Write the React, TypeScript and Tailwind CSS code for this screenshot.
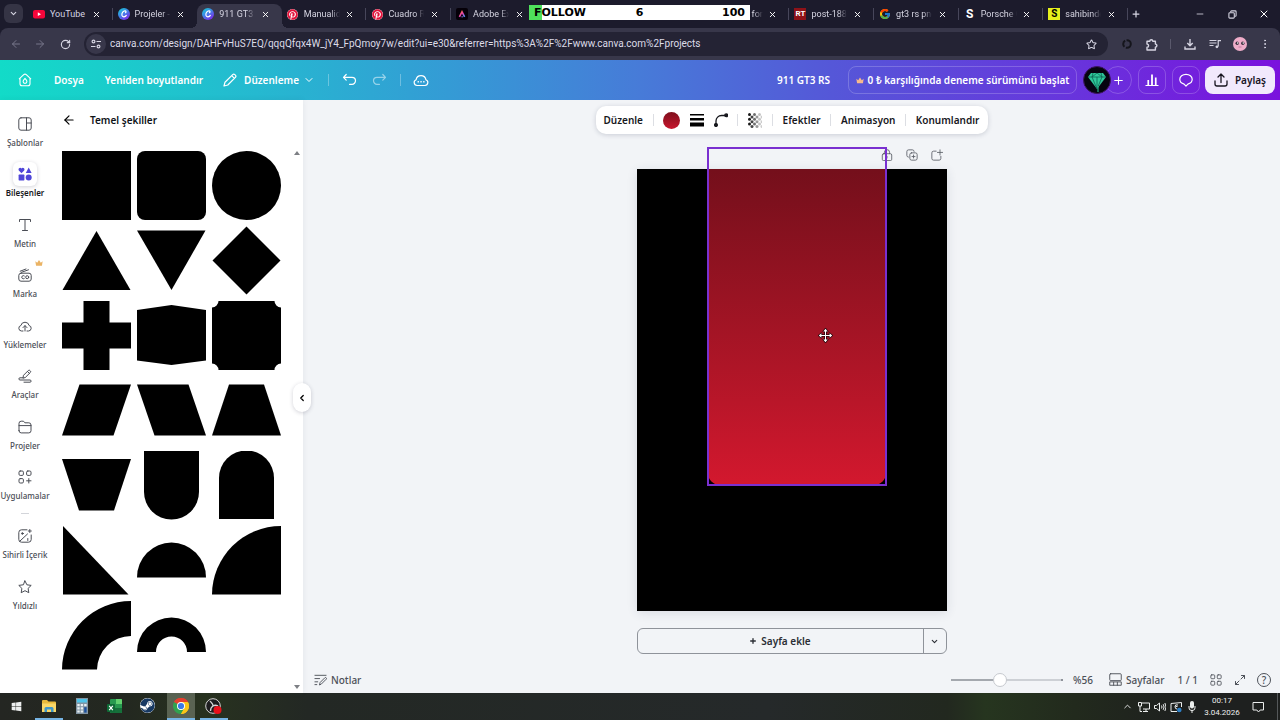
import React from "react";
import {
  ArrowLeft, ArrowRight, RotateCw, ChevronDown, ChevronLeft, ChevronUp, X, Plus, Minus, Star,
  EllipsisVertical, Maximize2,
} from "lucide-react";
import { FcGoogle } from "react-icons/fc";
import { FaSteam, FaPinterest, FaWindows } from "react-icons/fa";

const canvaFont = "font-['Noto_Sans','Open_Sans',sans-serif]";

function CanvaLogo() {
  return (
    <svg viewBox="0 0 12 12" className="size-3">
      <defs>
        <linearGradient id="cv" x1="0" y1="0" x2="0.7" y2="1">
          <stop offset="0" stopColor="#12d3cf" />
          <stop offset="0.45" stopColor="#3a8fe8" />
          <stop offset="1" stopColor="#7d2ae8" />
        </linearGradient>
      </defs>
      <circle cx="6" cy="6" r="6" fill="url(#cv)" />
      <path d="M8.300 7.400C7.400 9 4.400 9.600 3.900 7.200 3.500 5 5.400 2.800 7 2.900c1.200.1 1.300 1.300.5 1.800" fill="none" stroke="#fff" strokeWidth="1.200" strokeLinecap="round" />
    </svg>
  );
}

function YouTubeLogo() {
  return (
    <svg viewBox="0 0 12 12" className="size-3">
      <rect x="0" y="2" width="12" height="8.400" rx="2" fill="#f5063a" />
      <path d="M4.800 4.300 8 6.200 4.800 8.100z" fill="#fff" />
    </svg>
  );
}

function PinterestLogo() {
  return (
    <span className="block rounded-full bg-white">
      <FaPinterest className="size-[11px] text-[#e0123a]" />
    </span>
  );
}

function AdobeLogo() {
  return (
    <svg viewBox="0 0 12 12" className="size-3">
      <defs>
        <linearGradient id="ad" x1="0" y1="0" x2="1" y2="1">
          <stop offset="0" stopColor="#ff7a2f" />
          <stop offset="0.5" stopColor="#e83fb8" />
          <stop offset="1" stopColor="#3fa0ff" />
        </linearGradient>
      </defs>
      <rect width="12" height="12" rx="2" fill="#050008" />
      <path d="M3.400 8.800 6 3.800 8.600 8.800M5.600 8.800h1" fill="none" stroke="url(#ad)" strokeWidth="1.600" />
    </svg>
  );
}

const Badge = ({ letters, tone }: { letters: string; tone: string }) => (
  <span className={`flex size-3 items-center justify-center leading-3 font-bold ${tone}`}>{letters}</span>
);

type Tab = { title: string; icon: React.ReactNode; active?: boolean; end?: boolean };

const tabs: Tab[] = [
  { title: "YouTube", icon: <YouTubeLogo /> },
  { title: "Projeler -", icon: <CanvaLogo /> },
  { title: "911 GT3 R", icon: <CanvaLogo />, active: true },
  { title: "Manualid", icon: <PinterestLogo /> },
  { title: "Cuadro Re", icon: <PinterestLogo /> },
  { title: "Adobe Ex", icon: <AdobeLogo /> },
  { title: "", icon: null },
  { title: "", icon: null },
  { title: "S for", icon: null, end: true },
  { title: "post-1884", icon: <Badge letters="RT" tone="bg-[#8e1218] text-white text-[8px]" /> },
  { title: "gt3 rs png", icon: <FcGoogle className="size-3" /> },
  { title: "Porsche G", icon: <Badge letters="S" tone="text-white text-[12px]" /> },
  { title: "sahibinde", icon: <Badge letters="S" tone="bg-[#e6f01c] text-black text-[10px]" /> },
];

function TabStrip() {
  return (
    <div className="relative flex h-7 shrink-0 items-end bg-[#1c1b2c] text-[#d6d5e2]">
      <button aria-label="Sekme ara" className="mb-[5px] ml-1 flex size-[19px] items-center justify-center rounded-md bg-[#353445]">
        <ChevronDown className="size-[9px]" strokeWidth={3} />
      </button>
      <div className="ml-[5px] flex h-6 min-w-0 flex-1">
        {tabs.map((t, i) => (
          <div
            key={i}
            className={`relative flex h-6 min-w-0 flex-1 items-center pb-1 ${t.active ? "rounded-t-lg bg-[#38374a]" : ""}`}
          >
            {t.active && (
              <>
                <span className="absolute bottom-0 -left-1.5 size-1.5 bg-[radial-gradient(circle_at_0_0,transparent_6px,#38374a_6px)]" />
                <span className="absolute -right-1.5 bottom-0 size-1.5 bg-[radial-gradient(circle_at_100%_0,transparent_6px,#38374a_6px)]" />
              </>
            )}
            <span className="ml-[5px] flex size-3 shrink-0 items-center justify-center">{t.icon}</span>
            <span className={`ml-[5px] w-9 shrink-0 text-[9px] leading-4 whitespace-nowrap ${t.end ? "text-right" : ""} ${i > 0 ? "mask-r-from-75% mask-r-to-100%" : ""}`}>{t.title}</span>
            <button aria-label="Sekmeyi kapat" className="ml-1 flex size-3 shrink-0 items-center justify-center text-white">
              <X className="size-[9px]" strokeWidth={2.5} />
            </button>
            {i !== 1 && i !== 2 && <span className="absolute top-1 right-0 h-3 w-px bg-[#47465a]" />}
          </div>
        ))}
      </div>
      <button aria-label="Yeni sekme" className="mb-2 ml-0.5 flex size-3 items-center justify-center">
        <Plus className="size-[10px]" strokeWidth={3} />
      </button>
      <div className="mb-2 ml-[52px] flex gap-5 pr-[10px]">
        <button aria-label="Simge durumuna küçült" className="flex size-3 items-center justify-center"><Minus className="size-[10px]" /></button>
        <button aria-label="Önceki boyut" className="flex size-3 items-center justify-center">
          <svg viewBox="0 0 10 10" className="size-[9px]" fill="none" stroke="currentColor" strokeWidth="1.200">
            <rect x="1" y="3" width="6" height="6" rx="1" />
            <path d="M3 2.500V2a1 1 0 0 1 1-1h4a1 1 0 0 1 1 1v4a1 1 0 0 1-1 1h-.5" />
          </svg>
        </button>
        <button aria-label="Kapat" className="flex size-3 items-center justify-center text-white"><X className="size-3" strokeWidth={2} /></button>
      </div>
      <div className="absolute top-[5px] left-[529px] grid h-[15px] w-[221px] grid-cols-3 bg-[linear-gradient(90deg,#4fe05c_13px,#fff_13px)] px-[5px] font-['DejaVu_Sans',sans-serif] text-[11px] leading-[15px] font-bold text-black">
        <span>FOLLOW</span>
        <span className="text-center">6</span>
        <span className="text-right">100</span>
      </div>
    </div>
  );
}

function BrowserBar() {
  return (
    <div className="shrink-0 bg-[#1c1b2c]">
      <div className="flex h-8 items-center rounded-t-lg bg-[#38374a] text-[#d6d5e2]">
        <button aria-label="Geri" className="ml-[10px] text-[#77768a]"><ArrowLeft className="size-3" /></button>
        <button aria-label="İleri" className="ml-3 text-[#77768a]"><ArrowRight className="size-3" /></button>
        <button aria-label="Yenile" className="ml-[14px]"><RotateCw className="size-[11px]" strokeWidth={2.5} /></button>
        <div className="ml-[13px] flex h-6 min-w-0 flex-1 items-center rounded-full bg-[#242334] px-0.5">
          <span className="flex size-5 items-center justify-center rounded-full bg-[#38374a]">
            <svg viewBox="0 0 10 10" className="size-[10px]" fill="none" stroke="currentColor" strokeWidth="1.200">
              <circle cx="2.500" cy="2.500" r="1.400" /><path d="M5.500 2.500H10M0 7.500h4.500" /><circle cx="7.500" cy="7.500" r="1.400" />
            </svg>
          </span>
          <input
            aria-label="Adres çubuğu"
            className="ml-1 min-w-0 flex-1 bg-transparent text-[10px] leading-4 text-[#dcdbe8] outline-none"
            defaultValue="canva.com/design/DAHFvHuS7EQ/qqqQfqx4W_jY4_FpQmoy7w/edit?ui=e30&referrer=https%3A%2F%2Fwww.canva.com%2Fprojects"
          />
          <button aria-label="Yer işareti ekle" className="mr-[9px]"><Star className="size-[11px]" strokeWidth={2.2} /></button>
        </div>
        <svg viewBox="0 0 10 10" className="ml-[14px] size-[10px]" fill="none" stroke="#15151c" strokeWidth="2">
          <circle cx="5" cy="5" r="3.800" strokeDasharray="7 1.500" />
        </svg>
        <button aria-label="Uzantılar" className="ml-[13px]">
          <svg viewBox="0 0 13 13" className="size-[13px]" fill="none" stroke="currentColor" strokeWidth="1.400" strokeLinejoin="round">
            <path d="M2 3.200h2.800a1.500 1.500 0 0 1 3 0h2.600v2.900a1.500 1.500 0 0 1 0 3V12H2V9.300a1.600 1.600 0 0 0 0-3.200z" />
          </svg>
        </button>
        <span className="ml-3 h-[10px] w-px bg-[#5a596c]" />
        <button aria-label="İndirilenler" className="ml-[13px]">
          <svg viewBox="0 0 12 12" className="size-3" fill="none" stroke="currentColor" strokeWidth="1.400">
            <path d="M6 1v6.500M3.300 5 6 7.700 8.700 5M1 8.500V11h10V8.500" />
          </svg>
        </button>
        <button aria-label="Medya" className="ml-[13px]">
          <svg viewBox="0 0 12 12" className="size-3" fill="none" stroke="currentColor" strokeWidth="1.200">
            <path d="M.5 2.500h7M.5 5h7M.5 7.500h4M9.200 8.500V2.600H12" />
            <circle cx="7.900" cy="8.800" r="1.400" fill="currentColor" stroke="none" />
          </svg>
        </button>
        <button aria-label="Profil" className="ml-3">
          <svg viewBox="0 0 14 14" className="size-[14px]">
            <circle cx="7" cy="7" r="7" fill="#efadc9" />
            <circle cx="4.200" cy="6.300" r="1.700" fill="#3c2c3c" /><circle cx="9.800" cy="6.300" r="1.700" fill="#3c2c3c" />
            <circle cx="4.700" cy="6" r=".8" fill="#fff" /><circle cx="10.300" cy="6" r=".8" fill="#fff" />
            <path d="M5.500 10h3" stroke="#b5688c" strokeWidth=".7" />
          </svg>
        </button>
        <button aria-label="Menü" className="mr-[9px] ml-3"><EllipsisVertical className="size-3" /></button>
      </div>
    </div>
  );
}

const Crown = ({ className }: { className: string }) => (
  <svg viewBox="0 0 12 10" className={className} fill="currentColor">
    <path d="M.5 2.500 3.300 4.800 6 .5l2.700 4.300 2.800-2.300-1.100 6.500H1.600z" />
  </svg>
);

const Rule = ({ className }: { className: string }) => <span className={`w-px shrink-0 ${className}`} />;

function CanvaHeader() {
  return (
    <header className={`flex h-10 shrink-0 items-center bg-[linear-gradient(90deg,#12dbc8_0%,#25b9d0_20%,#349bd5_35%,#477bd8_50%,#5557d8_65%,#6638dc_82%,#7a12dd_100%)] text-[10px] leading-4 font-semibold whitespace-nowrap text-white ${canvaFont}`}>
      <button aria-label="Ana sayfa" className="ml-[18px]">
        <svg viewBox="0 0 14 14" className="size-[14px]" fill="none" stroke="currentColor" strokeWidth="1.100" strokeLinejoin="round">
          <path d="M1 6.200 5.700 1.700Q7 .6 8.300 1.700L13 6.200M2 5.400v5.400a2 2 0 0 0 2 2h6a2 2 0 0 0 2-2V5.400" />
          <path d="M7 5.400c-1.200 1.300-1.900 2-1.900 3.100a1.900 1.900 0 0 0 3.800 0C8.900 7.400 8.200 6.700 7 5.400z" />
        </svg>
      </button>
      <button className="ml-[22px]">Dosya</button>
      <button className="ml-[21px]">Yeniden boyutlandır</button>
      <button className="ml-5 flex items-center">
        <svg viewBox="0 0 14 14" className="mr-[7px] size-[14px]" fill="none" stroke="currentColor" strokeWidth="1.200" strokeLinejoin="round">
          <path d="M1 13l1-3.800 7.700-7.600a1.500 1.500 0 0 1 2.100 0l.6.6a1.500 1.500 0 0 1 0 2.100L4.800 12zM8.700 2.600l2.700 2.700" />
        </svg>
        Düzenleme
        <ChevronDown className="ml-1 size-3" />
      </button>
      <Rule className="ml-[13px] h-3 bg-white/30" />
      <button aria-label="Geri al" className="ml-[13px]">
        <svg viewBox="0 0 15 14" className="h-[14px] w-[15px]" fill="none" stroke="currentColor" strokeWidth="1.200" strokeLinecap="round" strokeLinejoin="round">
          <path d="M4.200 1.500 1.500 4.300l2.700 2.800M1.800 4.300H10a3.500 3.500 0 0 1 0 7H7.500" />
        </svg>
      </button>
      <button aria-label="Yinele" className="ml-[15px] opacity-50">
        <svg viewBox="0 0 15 14" className="h-[14px] w-[15px]" fill="none" stroke="currentColor" strokeWidth="1.200" strokeLinecap="round" strokeLinejoin="round">
          <path d="M10.800 1.500l2.700 2.800-2.700 2.800M13.200 4.300H5a3.500 3.500 0 0 0 0 7h2.500" />
        </svg>
      </button>
      <Rule className="ml-[13px] h-3 bg-white/30" />
      <button aria-label="Kaydedildi" className="ml-3">
        <svg viewBox="0 0 16 14" className="h-[14px] w-4" fill="none" stroke="currentColor" strokeWidth="1.200">
          <path d="M4 12.500a3 3 0 0 1-.9-5.800 5 5 0 0 1 9.800 0 3 3 0 0 1-.9 5.800z" />
          <path d="M4.600 8.700h1.300M7.400 8.700h1.300M10.200 8.700h1.300" strokeWidth="1.400" />
        </svg>
      </button>
      <span className="ml-auto">911 GT3 RS</span>
      <button className="ml-[18px] flex h-7 w-[229px] items-center justify-center gap-1 rounded-lg border border-white/20">
        <Crown className="h-[7px] w-2 text-[#f6b98c]" />
        0 ₺ karşılığında deneme sürümünü başlat
      </button>
      <div className="ml-1.5 flex items-center">
        <svg viewBox="0 0 28 28" className="z-10 size-7">
          <circle cx="14" cy="14" r="13.500" fill="#060410" stroke="#3d1560" />
          <path d="M8 7h12l3 4-9 12L5 11z" fill="#2fc79a" />
          <path d="M5 11h18M10 7l-1 4 5 12 5-12-1-4M14 7l-5 4M14 7l5 4M14 11v12" fill="none" stroke="#0a5a4a" strokeWidth=".7" />
          <path d="M15 20v6" stroke="#2fc79a" strokeWidth="1" />
        </svg>
        <button aria-label="Üye ekle" className="-ml-[7px] flex size-7 items-center justify-center rounded-full border border-white/20"><Plus className="size-[13px]" /></button>
      </div>
      <button aria-label="Analizler" className="ml-1.5 flex size-7 items-center justify-center rounded-lg border border-white/20">
        <svg viewBox="0 0 14 14" className="size-[14px]" fill="none" stroke="currentColor" strokeWidth="1.200"><path d="M.5 12.500h13M3 12V7.500h.5V12M6.700 12V2h.6v10M10.500 12V5h.5v7" /></svg>
      </button>
      <button aria-label="Yorumlar" className="ml-1.5 flex size-7 items-center justify-center rounded-lg border border-white/20">
        <svg viewBox="0 0 14 14" className="size-[14px]" fill="none" stroke="currentColor" strokeWidth="1.200" strokeLinejoin="round"><path d="M7 1.300c3.500 0 6.200 2.200 6.200 5 0 2.300-1.700 4.100-4.300 4.800L7 13.200l-1.900-2.100C2.500 10.400.8 8.600.8 6.300c0-2.800 2.700-5 6.200-5z" /></svg>
      </button>
      <button className="mr-[5px] ml-[5px] flex h-7 w-[70px] items-center justify-center gap-[7px] rounded-lg bg-[#f1e9fc] text-[#17141f]">
        <svg viewBox="0 0 14 14" className="size-[14px]" fill="none" stroke="currentColor" strokeWidth="1.300" strokeLinecap="round" strokeLinejoin="round"><path d="M7 9.500V1M4 4l3-3 3 3M1 8v3a2 2 0 0 0 2 2h8a2 2 0 0 0 2-2V8" /></svg>
        Paylaş
      </button>
    </header>
  );
}

const iconProps = { viewBox: "0 0 14 14", className: "size-[14px]", fill: "none", stroke: "currentColor", strokeWidth: 1, strokeLinejoin: "round" as const, strokeLinecap: "round" as const };

type NavEntry = { label: string; icon: React.ReactNode; active?: boolean; crown?: boolean };

const navTop: NavEntry[] = [
  { label: "Şablonlar", icon: <svg {...iconProps}><rect x=".8" y=".8" width="12.400" height="12.400" rx="2.200" /><path d="M8.500.8v12.400M8.500 6h4.700" /></svg> },
  { label: "Bileşenler", active: true, icon: <svg viewBox="0 0 14 14" className="size-[14px] text-[#4f46d8]" fill="currentColor"><path d="M3.500 6.300.8 3.400C-.3 1.800 2.200-.5 3.500 1.600 4.800-.5 7.300 1.800 6.200 3.400zM10.700.6l2.900 5.400H7.800z" /><rect x=".6" y="7.600" width="5.800" height="5.800" rx=".6" /><circle cx="10.700" cy="10.500" r="3" /></svg> },
  { label: "Metin", icon: <svg {...iconProps}><path d="M1.500 3.500V1.500h11v2M7 1.500v11M4.500 12.500h5" /></svg> },
  { label: "Marka", crown: true, icon: <svg {...iconProps}><rect x=".8" y="5.200" width="12.400" height="8" rx="2.200" /><path d="M2.200 3.200 8 1M3.500 4.300 10.500 1.800M6.300 7.900a1.600 1.600 0 1 0 0 2.600" /><circle cx="9.200" cy="9.200" r="1.500" /></svg> },
  { label: "Yüklemeler", icon: <svg {...iconProps}><path d="M5 12H3.500a2.800 2.800 0 0 1-.6-5.500 4.200 4.200 0 0 1 8.200 0 2.800 2.800 0 0 1-.6 5.500H9M7 12V6.800M5 8.600l2-2 2 2" /></svg> },
  { label: "Araçlar", icon: <svg {...iconProps}><path d="M5 8.800l.5-2.500L10.300 1.500a1.100 1.100 0 0 1 1.600 0l.4.4a1.100 1.100 0 0 1 0 1.600L7.500 8.300zM9.500 2.500l1.800 1.800M5 8.800H2a1 1 0 0 0 0 2.200h10a1 1 0 0 1 0 2.200H6" /></svg> },
  { label: "Projeler", icon: <svg {...iconProps}><path d="M1 10.700V3.400A2.200 2.200 0 0 1 3.200 1.200h2.300l1.400 1.600h3.900A2.200 2.200 0 0 1 13 5v5.700a2.200 2.200 0 0 1-2.200 2.200H3.200A2.200 2.200 0 0 1 1 10.700zM1 5.600h12" /></svg> },
  { label: "Uygulamalar", icon: <svg {...iconProps}><rect x="1" y="1" width="4.400" height="4.400" rx="1.200" /><rect x="8.600" y="1" width="4.400" height="4.400" rx="1.200" /><rect x="1" y="8.600" width="4.400" height="4.400" rx="1.200" /><path d="M10.800 8.600V13M8.600 10.800H13" /></svg> },
];

const navBottom: NavEntry[] = [
  { label: "Sihirli İçerik", icon: <svg {...iconProps}><path d="M9 .8H3.500A2.700 2.700 0 0 0 .8 3.500v7a2.700 2.700 0 0 0 2.700 2.700h7a2.700 2.700 0 0 0 2.700-2.700V6M1.800 12.200 9.500 5" /><circle cx="4.400" cy="4.500" r=".8" fill="currentColor" /><path d="M9.800 11.500v-2M11.800.5v3M10.300 2h3" /></svg> },
  { label: "Yıldızlı", icon: <svg {...iconProps}><path d="M7 .9l1.900 3.900 4.300.6-3.100 3 .7 4.300L7 10.700l-3.800 2 .7-4.300-3.100-3 4.300-.6z" /></svg> },
];

function NavItem({ item }: { item: NavEntry }) {
  return (
    <button className="relative flex h-[38px] flex-col items-center whitespace-nowrap text-[#4a4d55]">
      <span className={`flex size-6 shrink-0 items-center justify-center rounded-md ${item.active ? "bg-white shadow-[0_1px_4px_rgba(30,30,60,0.2)]" : ""}`}>
        {item.icon}
      </span>
      <span className={`text-[8px] leading-[14px] ${item.active ? "font-semibold text-[#17181d]" : "font-medium text-[#4a4d55]"}`}>{item.label}</span>
      {item.crown && <Crown className="absolute -top-1 left-1/2 ml-[10px] h-2 w-2 text-[#eab364]" />}
    </button>
  );
}

const shapes: { name: string; d: string }[] = [
  { name: "Kare", d: "M0 0H69V69H0z" },
  { name: "Yuvarlatılmış kare", d: "M8 0H61A8 8 0 0 1 69 8V61A8 8 0 0 1 61 69H8A8 8 0 0 1 0 61V8A8 8 0 0 1 8 0z" },
  { name: "Daire", d: "M34.500 0A34.500 34.500 0 0 1 34.500 69A34.500 34.500 0 0 1 34.500 0z" },
  { name: "Üçgen", d: "M34.500 5 68.500 64H.5z" },
  { name: "Ters üçgen", d: "M0 4.500H68.500L34.500 64z" },
  { name: "Eşkenar dörtgen", d: "M34.500.5 68.500 34.500 34.500 68.500.5 34.500z" },
  { name: "Artı", d: "M21.500 0H47.500V21.500H69V47.500H47.500V69H21.500V47.500H0V21.500H21.500z" },
  { name: "Afiş", d: "M0 9 34.500 4 69 9V59.500L34.500 64 0 59.500z" },
  { name: "Plaket", d: "M6.500 0H62.500A6.500 6.500 0 0 0 69 6.500V62.500A6.500 6.500 0 0 0 62.500 69H6.500A6.500 6.500 0 0 0 0 62.500V6.500A6.500 6.500 0 0 0 6.500 0z" },
  { name: "Paralelkenar", d: "M17.500 8.500H69L51.500 59.500H0z" },
  { name: "Ters paralelkenar", d: "M0 8.500H51.500L69 59.500H17.500z" },
  { name: "Yamuk", d: "M17 8.500H52L69 59.500H0z" },
  { name: "Ters yamuk", d: "M0 8H69L52 59.500H17z" },
  { name: "Ters kemer", d: "M7 0H62V41A27.500 27.500 0 0 1 7 41z" },
  { name: "Kemer", d: "M7 68V27A27.500 27.500 0 0 1 62 27V68z" },
  { name: "Dik üçgen", d: "M1 0 66.500 68.500H1z" },
  { name: "Yarım daire", d: "M0 51.500A34.500 35 0 0 1 69 51.500z" },
  { name: "Çeyrek daire", d: "M69 0V68.500H0A69 69 0 0 1 69 0z" },
  { name: "Çeyrek halka", d: "M69 0V35A34 34 0 0 0 35 68.500H0A69 69 0 0 1 69 0z" },
  { name: "Yarım halka", d: "M0 51A34.500 34.500 0 0 1 69 51H50A15.500 15.500 0 0 0 19 51z" },
];

function SidePanel() {
  return (
    <aside className="relative flex w-[303px] shrink-0 bg-white shadow-[0_0_6px_rgba(40,50,80,0.08)]">
      <nav className="flex w-[50px] shrink-0 flex-col items-center pt-3">
        <div className="flex h-[391px] flex-col items-center justify-between">
          {navTop.map((n) => <NavItem key={n.label} item={n} />)}
        </div>
        <span className="mt-[10px] h-px w-2 bg-[#d3d5da]" />
        <div className="mt-[10px] flex flex-col items-center gap-[13px]">
          {navBottom.map((n) => <NavItem key={n.label} item={n} />)}
        </div>
      </nav>
      <div className="ml-3 flex-1">
        <div className="flex h-10 items-center">
          <button aria-label="Geri dön"><ArrowLeft className="size-[14px]" strokeWidth={2} /></button>
          <h2 className="ml-[14px] text-[10px] leading-4 font-semibold text-[#0e1318]">Temel şekiller</h2>
        </div>
        <div className="mt-[11px] grid w-[219px] grid-cols-3 gap-1.5">
          {shapes.map((s) => (
            <button key={s.name} aria-label={s.name} className="aspect-square">
              <svg viewBox="0 0 69 69" className="block w-full"><path d={s.d} /></svg>
            </button>
          ))}
        </div>
      </div>
      <div className="flex w-3 flex-col items-center justify-between pt-[51px] pb-1">
        <svg viewBox="0 0 6 4" className="h-1 w-1.5 fill-[#7d7f84]"><path d="M3 0l3 4H0z" /></svg>
        <svg viewBox="0 0 6 4" className="h-1 w-1.5 fill-[#7d7f84]"><path d="M3 4l3-4H0z" /></svg>
      </div>
      <button aria-label="Paneli gizle" className="absolute top-[283px] -right-2 z-20 flex h-[29px] w-[18px] items-center justify-center rounded-full bg-white shadow-[0_1px_4px_rgba(30,30,60,0.2)]">
        <ChevronLeft className="size-[10px]" strokeWidth={3} />
      </button>
    </aside>
  );
}

const dots = Array.from({ length: 18 }, (_, i) => {
  const row = Math.floor(i / 3);
  return { x: 1.5 + (i % 3) * 5 + (row % 2) * 2.5, y: 1.5 + row * 2.4 };
});

function ContextBar() {
  return (
    <div className="flex h-7 w-[392px] items-center justify-between rounded-[10px] bg-white px-2 text-[10px] font-semibold text-[#17181d] shadow-[0_1px_5px_rgba(40,50,80,0.2)]">
      <button>Düzenle</button>
      <Rule className="h-3 bg-[#dcdee3]" />
      <button aria-label="Renk" className="size-[17px] rounded-full bg-linear-to-b from-[#7f0f1c] to-[#c8152d]" />
      <button aria-label="Kenarlık stili">
        <svg viewBox="0 0 14 14" className="size-[14px]"><path d="M0 1h14v1.500H0zM0 5h14v2.500H0zM0 9.500h14v4H0z" /></svg>
      </button>
      <button aria-label="Köşe yuvarlama">
        <svg viewBox="0 0 14 14" className="size-[14px]" fill="none" stroke="#17181d" strokeWidth="1.300"><path d="M2 11V8a5.500 5.500 0 0 1 5.500-5.500H11" /><circle cx="2" cy="12" r="1.400" fill="#17181d" /><circle cx="12.200" cy="2.300" r="1.400" fill="#17181d" /></svg>
      </button>
      <Rule className="h-3 bg-[#dcdee3]" />
      <button aria-label="Saydamlık">
        <svg viewBox="0 0 14 15" className="h-[15px] w-[14px]">
          {dots.map((p, i) => <circle key={i} cx={p.x} cy={p.y} r="1.500" fillOpacity={Math.max(0.2, 1 - p.x / 15)} />)}
        </svg>
      </button>
      <Rule className="h-3 bg-[#dcdee3]" />
      <button>Efektler</button>
      <Rule className="h-3 bg-[#dcdee3]" />
      <button>Animasyon</button>
      <Rule className="h-3 bg-[#dcdee3]" />
      <button>Konumlandır</button>
    </div>
  );
}

function Workspace() {
  return (
    <main className="flex min-w-0 flex-1 flex-col items-center bg-[#f2f4f7] pt-1.5">
      <ContextBar />
      <div className="mt-[13px] flex h-4 w-[310px] shrink-0 items-center justify-end gap-[13px] pr-1 text-[#5a5e66]">
        <button aria-label="Sayfayı kilitle"><svg {...iconProps} className="size-3"><rect x="1.500" y="5.500" width="11" height="8" rx="1.500" /><path d="M4 5.500V3.800a3 3 0 0 1 6 0v1.700M7 8.500v2" /></svg></button>
        <button aria-label="Sayfayı çoğalt"><svg {...iconProps} className="size-3"><rect x="4.500" y="4.500" width="8.500" height="8.500" rx="2" /><path d="M2.800 9.500A2 2 0 0 1 1 7.500V3a2 2 0 0 1 2-2h4.500a2 2 0 0 1 2 1.800M8.800 7v3.500M7 8.800h3.500" /></svg></button>
        <button aria-label="Sayfa ekle"><svg {...iconProps} className="size-3"><path d="M6 2.500H3a2 2 0 0 0-2 2V11a2 2 0 0 0 2 2h6.500a2 2 0 0 0 2-2V8.500M10.500 1v6M7.500 4h6" /></svg></button>
      </div>
      <div className="relative mt-1.5 h-[442px] w-[310px] shrink-0 bg-black shadow-[0_2px_10px_rgba(40,50,80,0.12)]">
        <div className="absolute top-0 left-[71px] h-[316px] w-[178px] rounded-b-xl bg-linear-to-b from-[#740f1b] to-[#d3182e]" />
        <div className="absolute -top-[22px] left-[70px] h-[339px] w-[180px] border-2 border-[#7a30d0]" />
        <svg viewBox="0 0 15 15" className="absolute top-[159px] left-[181px] size-[15px]" strokeLinejoin="round">
          <path d="M7.500 2v11M2 7.500h11" stroke="#2a060c" strokeWidth="2.600" />
          <path d="M7.500.8 9.700 3.400H5.300zM7.500 14.200 5.300 11.600h4.400zM.8 7.500 3.400 5.300v4.400zM14.200 7.500 11.600 9.700V5.300z" fill="#fff" stroke="#2a060c" strokeWidth="1.600" paintOrder="stroke" />
          <path d="M7.500 2.500v10M2.500 7.500h10" stroke="#fff" strokeWidth="1" />
        </svg>
      </div>
      <div className="mt-[17px] flex h-[26px] w-[310px] shrink-0 rounded-md border border-[#8f939a] text-[10px] font-semibold text-[#2b2e35]">
        <button className="flex flex-1 items-center justify-center gap-1"><Plus className="size-2" strokeWidth={4} />Sayfa ekle</button>
        <button aria-label="Sayfa seçenekleri" className="flex w-[23px] items-center justify-center border-l border-[#8f939a]"><ChevronDown className="size-[9px]" strokeWidth={3} /></button>
      </div>
      <footer className="mt-auto flex h-[27px] w-full shrink-0 items-center pl-[11px] text-[10px] leading-4 font-medium text-[#4d5159]">
        <button className="flex items-center gap-1">
          <svg {...iconProps} className="h-[13px] w-[13px]"><path d="M1 2.500h12M1 6h5M1 9.500h3M1 12.500h2M6 12.500l.6-2.300 5-5a1 1 0 0 1 1.500 1.500l-5 5z" /></svg>
          Notlar
        </button>
        <input
          type="range"
          aria-label="Yakınlaştırma"
          defaultValue={43}
          className="ml-auto h-4 w-28 appearance-none bg-[linear-gradient(90deg,#a4a8ae_44%,#cdd0d5_44%,#cdd0d5_98%,#8f939a_98%)] bg-size-[100%_2px] bg-center bg-no-repeat [&::-webkit-slider-thumb]:size-[14px] [&::-webkit-slider-thumb]:appearance-none [&::-webkit-slider-thumb]:rounded-full [&::-webkit-slider-thumb]:border [&::-webkit-slider-thumb]:border-[#c6c9ce] [&::-webkit-slider-thumb]:bg-white"
        />
        <span className="ml-[10px]">%56</span>
        <button className="ml-4 flex items-center gap-1">
          <svg {...iconProps} className="size-[13px]"><rect x=".8" y=".8" width="12.400" height="7.400" rx="1" /><path d="M.8 10v3.200h12.400V10zM5 10v3.200M9 10v3.200" /></svg>
          Sayfalar
        </button>
        <span className="ml-[13px]">1 / 1</span>
        <button aria-label="Izgara görünümü" className="ml-3"><svg {...iconProps} className="size-3"><rect x="1" y="1" width="4.500" height="4.500" rx="1" /><rect x="8.500" y="1" width="4.500" height="4.500" rx="1" /><rect x="1" y="8.500" width="4.500" height="4.500" rx="1" /><rect x="8.500" y="8.500" width="4.500" height="4.500" rx="1" /></svg></button>
        <button aria-label="Tam ekran" className="ml-3"><Maximize2 className="size-3" /></button>
        <button aria-label="Yardım" className="mr-[9px] ml-[11px] flex size-[14px] items-center justify-center rounded-full border border-[#4d5159] text-[10px] leading-3">?</button>
      </footer>
    </main>
  );
}

const apps: { name: string; line?: boolean; active?: boolean; icon: React.ReactNode }[] = [
  { name: "Dosya Gezgini", line: true, icon: <svg viewBox="0 0 16 16" className="size-4"><path d="M1 3a1 1 0 0 1 1-1h4l1.500 1.500H14a1 1 0 0 1 1 1V14H1z" fill="#e8b93c" /><path d="M1 5.500h14V14H1z" fill="#f9d768" /><path d="M3.500 14v-3.500a1.500 1.500 0 0 1 1.500-1.500h6a1.500 1.500 0 0 1 1.500 1.500V14h-2.500v-2.500h-4V14z" fill="#3f97c9" /></svg> },
  { name: "Hesap Makinesi", icon: <svg viewBox="0 0 16 16" className="size-4"><rect x="2" y="0" width="12" height="16" fill="#8295a3" /><rect x="3" y="1" width="10" height="3.500" fill="#4fc3e8" /><path d="M3.300 6h2.400v2.200H3.300zM6.700 6h2.400v2.200H6.700zM3.300 9.200h2.400v2.200H3.300zM6.700 9.200h2.400v2.200H6.700zM3.300 12.400h2.400v2.200H3.300zM6.700 12.400h2.400v2.200H6.700zM10.200 6h2.400v2.200h-2.400z" fill="#e8eff3" /><path d="M10.200 9.200h2.400v5.400h-2.400z" fill="#1b4f9c" /></svg> },
  { name: "Excel", icon: <svg viewBox="0 0 16 16" className="size-4"><rect x="3" y="1" width="12" height="14" rx="1" fill="#27994f" /><path d="M9 1h5a1 1 0 0 1 1 1v4H9z" fill="#62d16f" /><path d="M3 10h12v4a1 1 0 0 1-1 1H4a1 1 0 0 1-1-1z" fill="#15703a" /><rect x="0" y="6" width="8" height="8" rx="1" fill="#0f6b37" /><path d="M2.200 7.800l3.600 4.400M5.800 7.800l-3.600 4.400" stroke="#fff" strokeWidth="1.200" /></svg> },
  { name: "Steam", icon: <span className="block overflow-hidden rounded-full bg-white"><FaSteam className="size-[15px] text-[#173963]" /></span> },
  { name: "Chrome", line: true, active: true, icon: <svg viewBox="0 0 16 16" className="size-4"><path d="M8 8 1.070 4A8 8 0 0 1 14.930 4z" fill="#e6402f" /><path d="M8 8 14.930 4A8 8 0 0 1 8 16z" fill="#fbc618" /><path d="M8 8 8 16A8 8 0 0 1 1.070 4z" fill="#31a350" /><path d="M8 4h6.930L11.500 10z" fill="#fbc618" /><path d="M1.070 4 4.500 10 8 8V4z" fill="#31a350" /><path d="M1.070 4A8 8 0 0 1 14.930 4H8L4.500 6z" fill="#e6402f" /><path d="M11.500 10 8 16 4.500 10z" fill="#31a350" /><path d="M11.500 10 8 16A8 8 0 0 0 14.930 4z" fill="#fbc618" /><circle cx="8" cy="8" r="4" fill="#fff" /><circle cx="8" cy="8" r="3.100" fill="#3a7ae8" /></svg> },
  { name: "OBS", line: true, icon: <svg viewBox="0 0 18 16" className="h-4 w-[18px]"><circle cx="8" cy="8" r="7.300" fill="#1d1d1f" stroke="#d4d4d4" strokeWidth="1" /><path d="M8 8C8 5 6 4.500 5 3M8 8c2.500-1.500 4-.5 5 0M8 8c-2.500 1.500-2.500 3.500-2.500 5" fill="none" stroke="#d4d4d4" strokeWidth="1.300" /><circle cx="12.500" cy="12" r="4" fill="#e8101a" /></svg> },
];

function Taskbar() {
  return (
    <div className="flex h-[27px] shrink-0 items-stretch bg-[linear-gradient(90deg,#242622_0%,#232820_10%,#28321f_16%,#232824_24%,#25292a_60%,#22281f_74%,#26351f_77%,#222a1d_84%,#1e201f_92%)] text-[#eceeee]">
      <button aria-label="Başlat" className="flex w-8 items-center justify-center"><FaWindows className="size-[11px]" /></button>
      {apps.map((a) => (
        <button key={a.name} aria-label={a.name} className="flex w-[33px] items-center justify-center">
          <span className={`flex h-full w-7 items-center justify-center border-b-2 ${a.line ? "border-[#76b4e4]" : "border-transparent"} ${a.active ? "bg-[#5a6352]" : ""}`}>{a.icon}</span>
        </button>
      ))}
      <div className="ml-auto flex items-center">
        <ChevronUp className="size-[11px]" />
        <svg viewBox="0 0 12 12" className="ml-[5px] size-3" fill="none" stroke="currentColor" strokeWidth="1"><path d="M4 2h7.500v6H5M8 8v2.500M5 10.500h5M.5 1.500h3V5h-3zM2 5v5.500h2" /></svg>
        <svg viewBox="0 0 12 12" className="ml-1 size-3" fill="none" stroke="currentColor" strokeWidth="1"><path d="M.5 4.500h2L5.500 2v8l-3-2.500h-2zM7.500 4.500q1 1.500 0 3M9.200 3.200q1.800 2.800 0 5.600M10.900 2q2.300 4 0 8" /></svg>
        <svg viewBox="0 0 12 12" className="ml-1 size-3" fill="none" stroke="currentColor" strokeWidth="1"><path d="M7 10.500H1V2.500l10.500-1V6" /><path d="M8 4q-3-1-3 1.500T7 8M5.500 5.500h2" /><circle cx="9.300" cy="9" r="2.300" fill="#2f80c8" stroke="none" /></svg>
        <svg viewBox="0 0 12 12" className="ml-1 size-3" fill="currentColor"><rect x="4" y="0" width="4" height="7.500" rx="2" /><path d="M2.500 5h1v1.500a2.500 2.500 0 0 0 5 0V5h1v1.500a3.500 3.500 0 0 1-3 3.400V12h-1V9.900a3.500 3.500 0 0 1-3-3.400z" /></svg>
        <div className="ml-1.5 flex w-9 flex-col items-center text-[8px] leading-3">
          <span>00:17</span>
          <span>3.04.2026</span>
        </div>
        <svg viewBox="0 0 12 12" className="mr-[13px] ml-3 size-3" fill="none" stroke="currentColor" strokeWidth="1"><path d="M1 1.500h10.500v7.500H8.200L6.500 11 4.800 9H1z" /></svg>
        <Rule className="mr-[2px] h-[27px] bg-[#55585a]" />
      </div>
    </div>
  );
}

export default function App() {
  return (
    <div className="flex h-screen min-h-[720px] flex-col overflow-hidden font-['Roboto','Open_Sans',sans-serif] text-black">
      <TabStrip />
      <BrowserBar />
      <CanvaHeader />
      <div className={`flex min-h-0 flex-1 ${canvaFont}`}>
        <SidePanel />
        <Workspace />
      </div>
      <Taskbar />
    </div>
  );
}
